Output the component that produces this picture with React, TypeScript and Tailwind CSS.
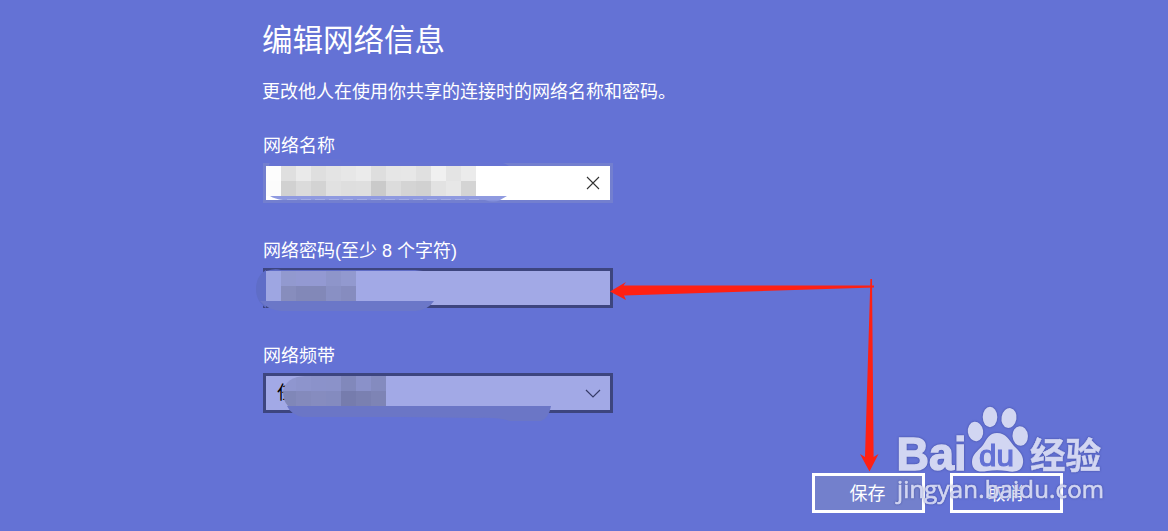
import type { ReactNode } from "react";

const ui = "font-['Liberation_Sans','Noto_Sans_CJK_SC',sans-serif]";

const nameCells = [
    ["#fdfdfd", "#dfdfdf", "#eaeaea", "#dfdfdf", "#e4e4e4", "#e7e7e7", "#ebebeb", "#dedede", "#e6e6e6", "#e7e7e7", "#e0e0e0", "#f0f0f0", "#e4e4e4", "#ebebeb"],
    ["#fcfcfc", "#d1d1d1", "#dbdbdb", "#d3d3d3", "#e1e1e1", "#dedede", "#dfdfdf", "#cacaca", "#dcdcdc", "#d4d4d4", "#d1d1d1", "#e2e2e2", "#e7e7e7", "#d4d4d4"],
];

const passwordCells = [
    ["#9ea6e2", "#9299cf", "#9399d2", "#9399d2", "#8e95ca", "#9299cf"],
    ["#9ea6e2", "#878dbd", "#8288b8", "#8288b8", "#8990c4", "#868cbf"],
];

const bandCells = [
    ["#8f96cf", "#8d94cc", "#8b92ca", "#8b92c9", "#8188bb", "#8a91c9", "#848bbf"],
    ["#8087b8", "#848abc", "#868cbf", "#848bbf", "#767cad", "#7a80b1", "#7e84b5"],
];

const Mosaic = ({cells, x}: {cells: string[][]; x: number}) => (
    <g shapeRendering="crispEdges">
        {cells.map((row, r) => row.map((fill, c) => (
            <rect key={`${r}-${c}`} x={x + c * 15} y={3 + r * 15} width={15} height={15} fill={fill} />
        )))}
    </g>
);

const Smudge = ({children}: {children: ReactNode}) => (
    <svg className="absolute inset-0 overflow-visible" width="350" height="40">
        {children}
    </svg>
);

const Field = ({label, box, icon, children}: {label: string; box: string; icon?: ReactNode; children: ReactNode}) => (
    <div className="flex flex-col gap-1">
        <label className="h-[25px] whitespace-nowrap text-[18px] leading-[25px]">{label}</label>
        <div className={`relative flex h-10 w-[350px] items-center justify-end border-3 ${box}`}>
            {children}
            {icon}
        </div>
    </div>
);

const Arrows = () => (
    <svg className="absolute inset-0" width="1168" height="531" fill="#ff2013">
        <path d="M610 291.5 L626 282 L623.5 285.5 L874 285.4 L874 287.4 L624 295.5 L626 300 Z" />
        <path d="M870.4 279 H872 L873.6 457 L878.5 454 L869.5 471.5 L860 454 L865 457 Z" />
    </svg>
);

const Watermark = () => (
    <svg className="absolute left-[888px] top-[400px] drop-shadow-[0_0_1px_rgba(50,60,140,0.7)]" width="230" height="110" fill="#d2d6f2">
        <text x="8.5" y="70" fontSize="47" fontWeight="700" stroke="#d2d6f2" strokeWidth="1.4" textLength="70" lengthAdjust="spacingAndGlyphs" className="font-['Liberation_Sans',sans-serif]">Bai</text>
        <ellipse cx="87.5" cy="31.5" rx="7.7" ry="9.8" transform="rotate(-8 87.5 31.5)" />
        <ellipse cx="102" cy="17" rx="7.3" ry="10.2" />
        <ellipse cx="121" cy="18" rx="7.5" ry="10" transform="rotate(10 121 18)" />
        <ellipse cx="132.2" cy="36" rx="7.7" ry="9.8" transform="rotate(-5 132.2 36)" />
        <path d="M109 33 C118 33 121 40 126 46 C131 51 136 55 135 63 C134 71 127 73 119 71 C112 70 106 70 99 71 C90 73 84 70 84 62 C84 54 90 51 95 45 C99 39 101 33 109 33 Z" />
        <text x="91" y="66" fontSize="30" fill="#6472d5" stroke="#6472d5" strokeWidth="1.2" textLength="35" lengthAdjust="spacingAndGlyphs" className="font-['Liberation_Sans',sans-serif]">du</text>
        <text x="142" y="69" fontSize="36" fontWeight="700" stroke="#d2d6f2" strokeWidth="0.5" textLength="71" lengthAdjust="spacingAndGlyphs" className="font-['Noto_Sans_CJK_SC',sans-serif]">经验</text>
        <text x="9" y="98" fontSize="24" stroke="#d2d6f2" strokeWidth="0.7" textLength="207" className="font-['Open_Sans','Noto_Sans',sans-serif]">jingyan.baidu.com</text>
    </svg>
);

export default function App() {
    return (
        <main className={`relative h-[531px] w-[1168px] overflow-hidden bg-[#6472d5] text-white ${ui}`}>
            <div className="flex h-full flex-col pl-[263px] pt-[18px]">
                <h1 className="-ml-px h-11 text-[30.5px] leading-[44px]">编辑网络信息</h1>
                <p className="-ml-px mt-[17px] h-[26px] text-[18px] leading-[26px]">更改他人在使用你共享的连接时的网络名称和密码。</p>
                <div className="mt-[29px] flex flex-col gap-9">
                    <Field
                        label="网络名称"
                        box="border-[#737fcf] bg-white"
                        icon={
                            <svg className="mr-[10px]" width="14" height="14" stroke="#333" strokeWidth="1.1">
                                <path d="M1 1 L13 13 M13 1 L1 13" />
                            </svg>
                        }
                    >
                        <Smudge>
                            <g transform="translate(-3 -3)">
                                <path d="M6 3 V1 C12 -4 24 -4 78 -4 V-1 H236 Q242 0 246 3 Z" fill="#6673d3" />
                                <Mosaic cells={nameCells} x={3} />
                                <path d="M7 33 H244 L237 37 H20 Q12 36 7 33 Z" fill="#8f9ae0" />
                                <path d="M24 36.5 H218" stroke="#a4aee7" strokeDasharray="10 4" />
                                <path d="M222 37 H238 Q230 40 222 37 Z" fill="#8490dc" />
                            </g>
                        </Smudge>
                    </Field>
                    <Field label="网络密码(至少 8 个字符)" box="border-[#3d457f] bg-[#a2a9e6]">
                        <Smudge>
                            <g transform="translate(-3 -3)">
                                <path d="M3 2 C-4 6 -7 13 -7 21 C-7 29 -4 35 3 40 Z" fill="#5f6dc7" />
                                <path d="M3 3 Q12 0 18 2 H152 L160 3 Z" fill="#5f6cc6" />
                                <Mosaic cells={passwordCells} x={3} />
                                <path d="M-3 33 H171 Q165 42 153 43 H18 Q5 42 -3 33 Z" fill="#6b77c8" />
                            </g>
                        </Smudge>
                    </Field>
                    <Field
                        label="网络频带"
                        box="border-[#3d457f] bg-[#a2a9e6]"
                        icon={
                            <svg className="mr-[9px] mt-[2px]" width="16" height="10" fill="none" stroke="#363c68" strokeWidth="1.2">
                                <path d="M1 1 L8 8 L15 1" />
                            </svg>
                        }
                    >
                        <span className="absolute left-[11px] top-1 text-[18px] leading-[26px] text-black">任</span>
                        <Smudge>
                            <g transform="translate(-3 -3)">
                                <clipPath id="band">
                                    <path d="M20 18 Q23 4 42 3 H123 V33 H25 Q20 28 20 18 Z" />
                                </clipPath>
                                <rect x="24" y="3" width="18" height="30" fill="#a2a9e6" />
                                <g clipPath="url(#band)">
                                    <Mosaic cells={bandCells} x={18} />
                                </g>
                                <path d="M24 33 H288 Q286 45 278 48 H247 Q234 44 215 45 L136 44 H40 Q28 42 24 33 Z" fill="#6b76c6" />
                            </g>
                        </Smudge>
                    </Field>
                </div>
                <div className="ml-[549px] mt-[60px] flex gap-[25px]">
                    <button className="h-10 w-[113px] border-3 border-white bg-[#7380cc] pr-0.5 pt-0.5 text-[18px] leading-[32px]">保存</button>
                    <button className="h-10 w-[113px] border-3 border-white pr-0.5 pt-0.5 text-[18px] leading-[32px]">取消</button>
                </div>
            </div>
            <Watermark />
            <Arrows />
        </main>
    );
}
